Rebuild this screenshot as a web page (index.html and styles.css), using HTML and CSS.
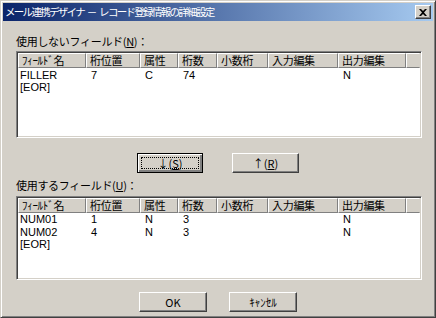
FILE: index.html
```html
<!DOCTYPE html>
<html lang="ja">
<head>
    <meta charset="UTF-8">
    <title>メール連携デザイナ － レコード登録情報の詳細設定</title>
    <link rel="stylesheet" href="styles.css">
</head>
<body>

<div class="window">
    <div class="titlebar">
        <span class="title">メール連携デザイナ <span class="dash">－</span> レコード登録情報の詳細設定</span>
        <button class="close-btn">
            <svg width="8" height="7" viewBox="0 0 8 7">
                <path d="M0 0h2l2 2 2-2h2L5 3.5 8 7H6L4 5 2 7H0l3-3.5z" fill="#000"/>
            </svg>
        </button>
    </div>

    <div class="content">
        <div class="label">使用しないフィールド(<u>N</u>)：</div>
        <div class="listview lv-top">
            <table>
                <thead>
                    <tr>
                        <th class="c1">ﾌｨｰﾙﾄﾞ名</th>
                        <th class="c2">桁位置</th>
                        <th class="c3">属性</th>
                        <th class="c4">桁数</th>
                        <th class="c5">小数桁</th>
                        <th class="c6">入力編集</th>
                        <th class="c7">出力編集</th>
                        <th class="rest"></th>
                    </tr>
                </thead>
                <tbody>
                    <tr><td>FILLER</td><td>7</td><td>C</td><td>74</td><td></td><td></td><td>N</td><td></td></tr>
                    <tr><td>[EOR]</td><td></td><td></td><td></td><td></td><td></td><td></td><td></td></tr>
                </tbody>
            </table>
        </div>

        <div class="btn-row move-row">
            <button class="btn default"><span class="focus">↓(<u>S</u>)</span></button>
            <button class="btn">↑(<u>R</u>)</button>
        </div>

        <div class="label label-used">使用するフィールド(<u>U</u>)：</div>
        <div class="listview lv-bottom">
            <table>
                <thead>
                    <tr>
                        <th class="c1">ﾌｨｰﾙﾄﾞ名</th>
                        <th class="c2">桁位置</th>
                        <th class="c3">属性</th>
                        <th class="c4">桁数</th>
                        <th class="c5">小数桁</th>
                        <th class="c6">入力編集</th>
                        <th class="c7">出力編集</th>
                        <th class="rest"></th>
                    </tr>
                </thead>
                <tbody>
                    <tr><td>NUM01</td><td>1</td><td>N</td><td>3</td><td></td><td></td><td>N</td><td></td></tr>
                    <tr><td>NUM02</td><td>4</td><td>N</td><td>3</td><td></td><td></td><td>N</td><td></td></tr>
                    <tr><td>[EOR]</td><td></td><td></td><td></td><td></td><td></td><td></td><td></td></tr>
                </tbody>
            </table>
        </div>

        <div class="btn-row ok-row">
            <button class="btn wide">OK</button>
            <button class="btn wide">ｷｬﾝｾﾙ</button>
        </div>
    </div>
</div>

</body>
</html>
```

FILE: styles.css
```css
/* ダイアログ全体 */
body {
    margin: 0;
    background-color: #d4d0c8;
    font-family: "Noto Sans CJK JP", "DejaVu Sans", sans-serif;
    font-size: 11px;
    color: #000;
}
.window {
    width: 436px;
    height: 318px;
    box-sizing: border-box;
    background-color: #d4d0c8;
    border: 1px solid;
    border-color: #d4d0c8 #404040 #404040 #d4d0c8;
    box-shadow: inset 1px 1px 0 #fff, inset -1px -1px 0 #808080;
    padding: 2px;
}
.titlebar {
    height: 18px;
    display: flex;
    align-items: center;
    justify-content: space-between;
    padding: 0 2px 0 2px;
    background: linear-gradient(to right, #0a246a, #a6caf0);
    color: #fff;
}
.title {
    font-size: 10.5px;
    letter-spacing: -1.7px;
    line-height: 18px;
}
.dash {
    margin: 0 3px 0 2px;
}
.close-btn {
    width: 16px;
    height: 14px;
    padding: 0;
    display: flex;
    align-items: center;
    justify-content: center;
    background-color: #d4d0c8;
    border: 1px solid;
    border-color: #fff #404040 #404040 #fff;
    box-shadow: inset -1px -1px 0 #808080;
}
.content {
    padding: 13px 11px 0 13px;
}
.label {
    height: 14px;
    line-height: 14px;
    letter-spacing: -0.3px;
    margin-bottom: 3px;
}
.label-used {
    margin-top: 5px;
    margin-bottom: 4px;
}

/* リストビュー */
.listview {
    box-sizing: border-box;
    width: 406px;
    background-color: #fff;
    border: 1px solid;
    border-color: #808080 #fff #fff #808080;
    box-shadow: inset 1px 1px 0 #404040, inset -1px -1px 0 #d4d0c8;
    padding: 1px;
    overflow: hidden;
}
.lv-top {
    height: 87px;
}
.lv-bottom {
    height: 84px;
}
.listview table {
    width: 402px;
    table-layout: fixed;
    border-collapse: separate;
    border-spacing: 0;
}
.listview th {
    height: 13px;
    padding: 0 0 0 3px;
    background-color: #d4d0c8;
    border: 1px solid;
    border-color: #fff #808080 #808080 #fff;
    font-weight: normal;
    text-align: left;
    line-height: 13px;
    white-space: nowrap;
    letter-spacing: -0.3px;
}
.listview th.rest {
    border-right-color: #d4d0c8;
}
.c1 { width: 63px; }
.c2 { width: 49px; }
.c3 { width: 33px; }
.c4 { width: 34px; }
.c5 { width: 46px; }
.c6 { width: 65px; }
.c7 { width: 63px; }
.listview td {
    height: 12px;
    line-height: 12px;
    padding: 0 0 0 5px;
    white-space: nowrap;
    font-family: "Liberation Sans", sans-serif;
    font-size: 11px;
}
.listview td:first-child {
    padding-left: 2px;
}
.lv-top tbody tr:first-child td {
    padding-top: 1px;
}
.lv-bottom tbody tr td {
    height: 12.5px;
}

/* ボタン */
.btn-row {
    display: flex;
    justify-content: center;
    padding-right: 2px;
}
.move-row {
    margin-top: 15px;
    gap: 29px;
}
.ok-row {
    margin-top: 12px;
    gap: 22px;
}
.btn {
    width: 67px;
    height: 20px;
    padding: 0;
    box-sizing: border-box;
    font-family: inherit;
    font-size: 11px;
    background-color: #d4d0c8;
    border: 1px solid;
    border-color: #fff #404040 #404040 #fff;
    box-shadow: inset -1px -1px 0 #808080;
    color: #000;
}
.btn.wide {
    width: 68px;
}
.btn.default {
    width: 66px;
    border: 1px solid #000;
    box-shadow: inset 1px 1px 0 #fff, inset -2px -2px 0 #808080, inset -1px -1px 0 #404040;
    padding: 3px;
}
.focus {
    display: block;
    height: 100%;
    box-sizing: border-box;
    border: 1px dotted #000;
    line-height: 10px;
}
```
